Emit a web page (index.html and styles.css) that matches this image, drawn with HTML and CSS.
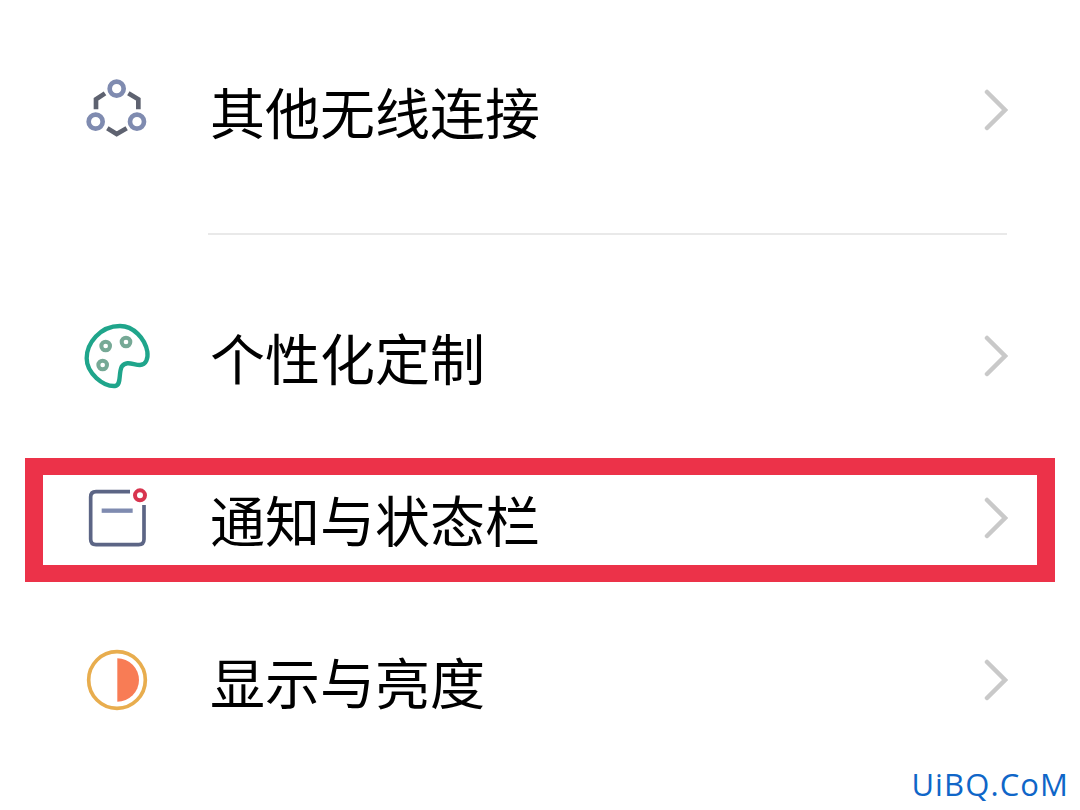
FILE: index.html
```html
<!DOCTYPE html>
<html lang="zh-CN">
<head>
<meta charset="utf-8">
<title>设置</title>
<link rel="stylesheet" href="styles.css">
</head>
<body>
<main class="settings">
  <div class="row">
    <svg class="icon" viewBox="45 57 192 192"><g class="net-lines"><path d="M105 100L78 118V148"/><path d="M175 100L205 118V148"/><path d="M112 205L140 222L170 205"/></g><g class="net-nodes"><circle cx="140" cy="86" r="21"/><circle cx="77" cy="185" r="21"/><circle cx="201" cy="185" r="21"/></g></svg>
    <span class="label">其他无线连接</span>
    <svg class="chevron" viewBox="0 0 24 42"><path d="M3 3L21 21L3 39"/></svg>
  </div>
  <div class="divider"></div>
  <div class="row">
    <svg class="icon" viewBox="45 45 192 192"><path class="palette" d="M150 48C90 48 50 100 50 145C50 190 100 230 135 228C155 226 145 190 155 170C170 150 190 165 210 165C228 165 235 145 232 125C225 85 190 48 150 48Z"/><g class="palette-dots"><circle cx="107" cy="108" r="13"/><circle cx="168" cy="96" r="13"/><circle cx="98" cy="165" r="13"/></g></svg>
    <span class="label">个性化定制</span>
    <svg class="chevron" viewBox="0 0 24 42"><path d="M3 3L21 21L3 39"/></svg>
  </div>
  <div class="row">
    <div class="highlight"></div>
    <svg class="icon" viewBox="225 111 192 192"><path class="notice-frame" d="M360 125H258Q242 125 242 141V268Q242 284 258 284H386Q402 284 402 268V165"/><path class="notice-bar" d="M275 182H368"/><circle class="notice-dot" cx="390" cy="136" r="15"/></svg>
    <span class="label">通知与状态栏</span>
    <svg class="chevron" viewBox="0 0 24 42"><path d="M3 3L21 21L3 39"/></svg>
  </div>
  <div class="row">
    <svg class="icon" viewBox="45 42 192 192"><circle class="sun-ring" cx="141" cy="135" r="85"/><path class="sun-half" d="M142 70A65 65 0 0 1 142 200Z"/></svg>
    <span class="label">显示与亮度</span>
    <svg class="chevron" viewBox="0 0 24 42"><path d="M3 3L21 21L3 39"/></svg>
  </div>
</main>
<div class="watermark">UiBQ.CoM</div>
</body>
</html>
```
FILE: styles.css
```css
html, body {
  margin: 0;
  height: 810px;
  overflow: hidden;
  background: #fff;
}
body {
  position: relative;
  font-family: "Noto Sans CJK SC", "Noto Sans", sans-serif;
}
.settings {
  display: flex;
  flex-direction: column;
  padding-top: 30px;
}
.row {
  position: relative;
  display: flex;
  align-items: center;
  height: 162px;
  padding: 0 72px 0 85px;
}
.icon {
  flex: none;
  width: 64px;
  height: 64px;
  fill: none;
  overflow: visible;
}
.label {
  flex: 1;
  margin: 0 0 2px 61px;
  font-size: 55px;
  font-weight: 400;
  line-height: 64px;
  color: #000;
}
.chevron {
  flex: none;
  width: 24px;
  height: 42px;
  margin-bottom: 2px;
  fill: none;
  stroke: #c9c9c9;
  stroke-width: 4.5;
  stroke-linecap: round;
}
.divider {
  height: 2px;
  margin: 41px 73px 41px 208px;
  background: #e9e9e9;
}
.highlight {
  position: absolute;
  left: 25px;
  top: 20px;
  width: 1030px;
  height: 124px;
  box-sizing: border-box;
  border: 17px solid #ec3249;
  border-left-width: 18px;
  border-right-width: 18px;
}
.net-lines path {
  stroke: #5e6270;
  stroke-width: 14;
}
.net-nodes circle {
  stroke: #7f8bb0;
  stroke-width: 14;
}
.palette {
  stroke: #1fa58b;
  stroke-width: 13;
}
.palette-dots circle {
  stroke: #76a996;
  stroke-width: 12;
}
.notice-frame {
  stroke: #5c6585;
  stroke-width: 11;
}
.notice-bar {
  stroke: #7f8bb0;
  stroke-width: 13;
}
.notice-dot {
  stroke: #d8354f;
  stroke-width: 12;
}
.sun-ring {
  stroke: #e8ad4e;
  stroke-width: 11;
}
.sun-half {
  fill: #f87c55;
}
.watermark {
  position: absolute;
  right: 11px;
  bottom: 6px;
  font-family: "Open Sans", sans-serif;
  font-size: 31px;
  letter-spacing: 1.1px;
  line-height: 40px;
  color: #0f66c8;
}
```
